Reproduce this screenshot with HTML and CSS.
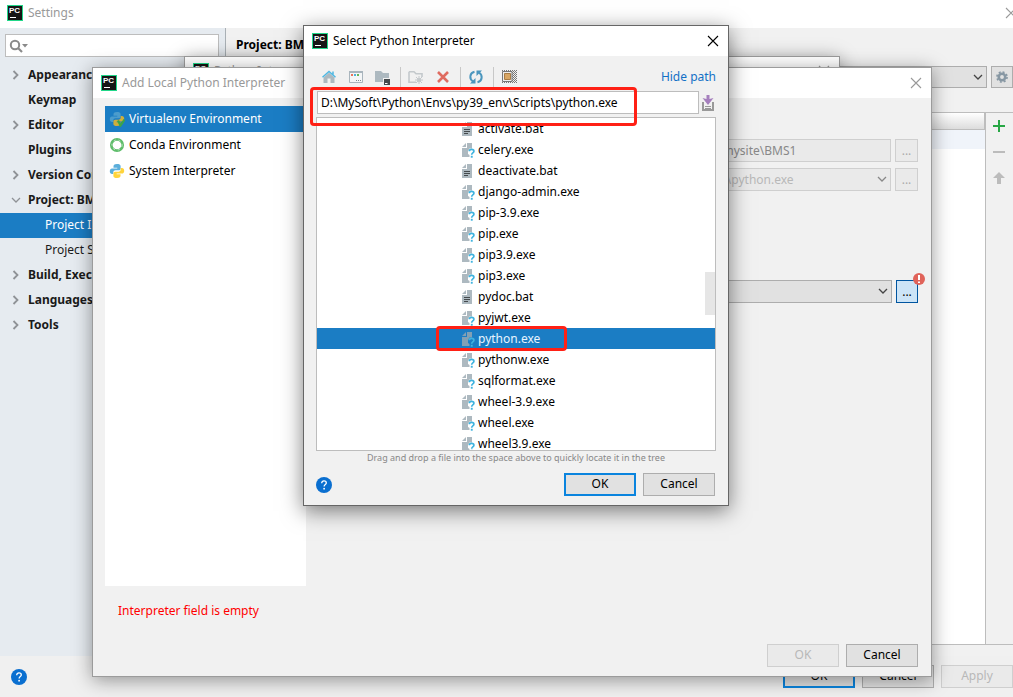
FILE: index.html
```html
<!DOCTYPE html>
<html lang="en">
<head>
<meta charset="utf-8">
<title>Settings</title>
<link rel="stylesheet" href="styles.css">
</head>
<body>
<svg class="defs" aria-hidden="true">
  <symbol id="chev-right" viewBox="0 0 10 10"><path d="M2.500 1 L6.500 5 L2.500 9" fill="none" stroke="#8f9296" stroke-width="1.800"/></symbol>
  <symbol id="chev-down" viewBox="0 0 10 10"><path d="M1 3 L5 7 L9 3" fill="none" stroke="currentColor" stroke-width="1.300"/></symbol>
  <symbol id="close" viewBox="0 0 12 12"><path d="M1 1 L11 11 M11 1 L1 11" fill="none" stroke="currentColor" stroke-width="1.100"/></symbol>
  <symbol id="help" viewBox="0 0 16 16"><circle cx="8" cy="8" r="8" fill="#0a6fd0"/><path d="M5.700 6.200 C5.700 4.700 6.700 3.900 8 3.900 C9.400 3.900 10.300 4.700 10.300 5.900 C10.300 7.600 8.100 7.500 8.100 9.500" fill="none" stroke="#fff" stroke-width="1.300"/><rect x="7.300" y="10.900" width="1.600" height="1.600" fill="#fff"/></symbol>
  <symbol id="py" viewBox="0 0 16 16"><path d="M8 1C5 1 4.500 2.100 4.500 3.200V4.800H8.300V5.400H3C1.600 5.400 .8 6.600 .8 8.300S1.800 11 3 11H4.300V9.400C4.300 8.100 5.300 7.300 6.500 7.300H9.800C10.900 7.300 11.600 6.500 11.600 5.500V3.100C11.600 1.600 10.200 1 8 1Z" fill="var(--a)"/><path d="M8 15c3 0 3.500-1.100 3.500-2.200v-1.600H7.700v-.6H13c1.400 0 2.200-1.200 2.200-2.900S14.200 5 13 5h-1.300v1.600c0 1.300-1 2.100-2.200 2.100H6.200c-1.100 0-1.800.8-1.800 1.800v2.400C4.400 14.400 5.800 15 8 15Z" fill="var(--b)"/></symbol>
  <symbol id="bat" viewBox="0 0 14 16"><path d="M6 1H11V15H1V6H6Z M1 5L5 1V5Z" fill="#adb9c0"/><path d="M3 8.500H9M3 10.500H9M3 12.500H7" stroke="#454a4d" stroke-width="1"/></symbol>
  <symbol id="exe" viewBox="0 0 14 16"><path d="M6 1H11V6.500H8.500L7 9V12L8.500 13V15H1V6H6Z M1 5L5 1V5Z" fill="var(--f,#adb9c0)"/><path d="M8.300 9.300C8.300 7.800 9.300 7.300 10.600 7.300C12 7.300 12.900 8 12.900 9.200C12.900 11 10.700 10.900 10.700 12.700" fill="none" stroke="#3fb3df" stroke-width="1.700"/><rect x="9.800" y="13.800" width="1.900" height="1.900" fill="#3fb3df"/></symbol>
</svg>

<main class="settings">
  <header class="titlebar settings-title">
    <span class="logo">PC</span><h1>Settings</h1>
    <button class="close" aria-label="Close settings"><svg><use href="#close"/></svg></button>
  </header>
  <div class="settings-body">
    <nav class="sidebar" aria-label="Settings sections">
      <label class="search">
        <svg viewBox="0 0 20 16"><circle cx="6" cy="7" r="4.200" fill="none" stroke="#8a8a8a" stroke-width="2"/><path d="M9 10L13 14" stroke="#8a8a8a" stroke-width="2.200"/><path d="M13 6H19L16 9.500Z" fill="#8a8a8a"/></svg>
        <input type="text" aria-label="Search settings">
      </label>
      <ul class="sections">
        <li><svg><use href="#chev-right"/></svg>Appearance &amp; Behavior</li>
        <li><svg></svg>Keymap</li>
        <li><svg><use href="#chev-right"/></svg>Editor</li>
        <li><svg></svg>Plugins</li>
        <li><svg><use href="#chev-right"/></svg>Version Control</li>
        <li><svg class="open"><use href="#chev-down"/></svg>Project: BMS1</li>
        <li class="child selected">Project Interpreter</li>
        <li class="child">Project Structure</li>
        <li><svg><use href="#chev-right"/></svg>Build, Execution, Deployment</li>
        <li><svg><use href="#chev-right"/></svg>Languages &amp; Frameworks</li>
        <li><svg><use href="#chev-right"/></svg>Tools</li>
      </ul>
    </nav>
    <section class="page">
      <h2>Project: BMS1</h2>
      <div class="interp-row">
        <div class="combo"><select aria-label="Project interpreter"><option></option></select><svg><use href="#chev-down"/></svg></div>
        <button class="gear" aria-label="Interpreter options"><svg viewBox="0 0 16 16"><circle cx="8" cy="8" r="3.700" fill="none" stroke="#8797a3" stroke-width="3"/><circle cx="8" cy="8" r="5.800" fill="none" stroke="#8797a3" stroke-width="1.800" stroke-dasharray="2.300 2.255"/></svg></button>
      </div>
      <div class="packages">
        <div class="package-list"><div class="package-head"></div><div class="package-row"></div></div>
        <div class="package-tools">
          <button aria-label="Install"><svg viewBox="0 0 12 12"><path d="M0 6H12M6 0V12" stroke="#27a745" stroke-width="2"/></svg></button>
          <button aria-label="Uninstall"><svg viewBox="0 0 12 12"><path d="M0 6H12" stroke="#bcbcbc" stroke-width="2"/></svg></button>
          <button aria-label="Upgrade"><svg viewBox="0 0 12 12"><path d="M6 0L12 6H8V12H4V6H0Z" fill="#bcbcbc"/></svg></button>
        </div>
      </div>
    </section>
  </div>
  <footer class="settings-footer">
    <button class="help" aria-label="Help"><svg><use href="#help"/></svg></button>
    <button class="btn primary">OK</button>
    <button class="btn">Cancel</button>
    <button class="btn" disabled>Apply</button>
  </footer>
</main>

<section class="window interpreters">
  <header class="titlebar"><span class="logo">PC</span><h2>Python Interpreters</h2>
    <button class="close" aria-label="Close interpreters"><svg><use href="#close"/></svg></button></header>
</section>

<section class="window add">
  <header class="titlebar"><span class="logo">PC</span><h2>Add Local Python Interpreter</h2>
    <button class="close" aria-label="Close add interpreter"><svg><use href="#close"/></svg></button></header>
  <div class="add-body">
    <ul class="kinds">
      <li class="selected"><svg class="py-dim" viewBox="0 0 16 16"><use href="#py"/><path d="M9 9.500L11.500 14.500L15.500 8.500" fill="none" stroke="#3da547" stroke-width="2.200"/></svg>Virtualenv Environment</li>
      <li><svg viewBox="0 0 16 16"><circle cx="8" cy="8" r="5.700" fill="none" stroke="#5fbd6b" stroke-width="2.700"/><circle cx="8" cy="8" r="5.100" fill="none" stroke="#c4e8c9" stroke-width="1" stroke-dasharray="2 3"/></svg>Conda Environment</li>
      <li><svg class="py" viewBox="0 0 16 16"><use href="#py"/></svg>System Interpreter</li>
    </ul>
    <div class="form">
      <div class="field"><input type="text" value="Code\mysite\BMS1" aria-label="Location" disabled><button class="browse" aria-label="Browse location" disabled>...</button></div>
      <div class="field"><div class="combo muted"><select aria-label="Base interpreter" disabled><option>Scripts\python.exe</option></select><svg><use href="#chev-down"/></svg></div><button class="browse" aria-label="Browse base interpreter" disabled>...</button></div>
      <div class="field existing"><div class="combo"><select aria-label="Interpreter"><option></option></select><svg><use href="#chev-down"/></svg></div><button class="browse active" aria-label="Browse interpreter">...<svg class="error" viewBox="0 0 12 12"><circle cx="6" cy="6" r="6" fill="#e0635a"/><path d="M6 2V7M6 8.500V10" stroke="#fff" stroke-width="2"/></svg></button></div>
    </div>
  </div>
  <p class="problem">Interpreter field is empty</p>
  <footer class="actions"><button class="btn" disabled>OK</button><button class="btn">Cancel</button></footer>
</section>

<section class="window select" role="dialog" aria-label="Select Python Interpreter">
  <header class="titlebar"><span class="logo">PC</span><h2>Select Python Interpreter</h2>
    <button class="close" aria-label="Close"><svg><use href="#close"/></svg></button></header>
  <div class="toolbar">
    <button aria-label="Home"><svg viewBox="0 0 16 16"><path d="M2.500 8.500L8 3.800L13.500 8.500V14H9.500V9.500H6.500V14H2.500Z" fill="#adb9c0"/><path d="M1.500 8.300L8 2.500L14.500 8.300M12 2.500V6" fill="none" stroke="#50b8e2" stroke-width="1.500"/></svg></button>
    <button aria-label="Desktop"><svg viewBox="0 0 16 16"><path d="M1.500 2.500H14.500V13.500H1.500Z" fill="#f4f6f7" stroke="#a9b5bd"/><path d="M1 3H15" stroke="#a9b5bd" stroke-width="2"/><path d="M3 5H5V7H3Z" fill="#e8745e"/><path d="M6 5H8V7H6Z" fill="#4eb2da"/><path d="M9 5H11V7H9Z" fill="#67b65a"/><path d="M8 11.500H9M10 11.500H11M12 11.500H13" stroke="#808b92"/></svg></button>
    <button aria-label="Project directory"><svg viewBox="0 0 16 16"><path d="M0 2H6L8 4H14V9H8V13H0Z" fill="#adb9c0"/><path d="M9 10H15V16H9Z" fill="#454a4d"/><path d="M10 14.500H12.500" stroke="#fff"/></svg></button>
    <span class="sep"></span>
    <button aria-label="New folder"><svg viewBox="0 0 16 16"><path d="M1 2.800H6L8 4.800H14V8M8 13.200H1V2.800" fill="none" stroke="#c4c9cc" stroke-width="1.600"/><circle cx="11" cy="11" r="2" fill="#c4c9cc"/><path d="M11 7V15M7 11H15M8 8L14 14M14 8L8 14" stroke="#c4c9cc"/></svg></button>
    <button aria-label="Delete"><svg viewBox="0 0 16 16"><path d="M3 3L13 13M13 3L3 13" stroke="#df6b60" stroke-width="2.600"/></svg></button>
    <span class="sep"></span>
    <button aria-label="Refresh"><svg viewBox="0 0 16 16"><path d="M6.500 2.800C1.500 4 1 10 5 12.500M9.500 13.200C14.500 12 15 6 11 3.500" fill="none" stroke="#4b96be" stroke-width="2"/><path d="M2 14.500H7.500V9Z M14 1.500H8.500V7Z" fill="#4b96be"/></svg></button>
    <span class="sep"></span>
    <button aria-label="Show hidden files"><svg viewBox="0 0 16 16"><path d="M1 1.500H16M1 3.500H16M1 5.500H16M1 7.500H16M1 9.500H16M1 11.500H16M1 13.500H16" stroke="#777" stroke-dasharray="1 1"/><path d="M1 2.500H16M1 4.500H16M1 6.500H16M1 8.500H16M1 10.500H16M1 12.500H16" stroke="#777" stroke-dasharray="1 1" stroke-dashoffset="1"/><path d="M1.500 2.500H11V12.500H1.500Z" fill="#eee" stroke="#777"/><path d="M3.500 4.500H9.500V10.500H3.500Z" fill="#d8a664" stroke="#a97c45"/></svg></button>
    <a class="hide-path" href="#path">Hide path</a>
  </div>
  <div class="path-row">
    <input id="path" type="text" aria-label="Path" value="D:\MySoft\Python\Envs\py39_env\Scripts\python.exe">
    <button class="history" aria-label="Recent paths"><svg viewBox="0 0 12 16"><path d="M1 7V15H11V7" fill="none" stroke="#999" stroke-width="2"/><path d="M3 11.500H9M3 13.500H9" stroke="#999"/><path d="M4.500 0H7.500V4L11.500 3L6 10L.500 3L4.500 4Z" fill="#a57fbd"/></svg></button>
    <span class="mark path-mark"></span>
  </div>
  <div class="tree">
    <ul>
      <li><svg><use href="#bat"/></svg>activate.bat</li>
      <li><svg><use href="#exe"/></svg>celery.exe</li>
      <li><svg><use href="#bat"/></svg>deactivate.bat</li>
      <li><svg><use href="#exe"/></svg>django-admin.exe</li>
      <li><svg><use href="#exe"/></svg>pip-3.9.exe</li>
      <li><svg><use href="#exe"/></svg>pip.exe</li>
      <li><svg><use href="#exe"/></svg>pip3.9.exe</li>
      <li><svg><use href="#exe"/></svg>pip3.exe</li>
      <li><svg><use href="#bat"/></svg>pydoc.bat</li>
      <li><svg><use href="#exe"/></svg>pyjwt.exe</li>
      <li class="selected"><svg><use href="#exe"/></svg>python.exe<span class="mark file-mark"></span></li>
      <li><svg><use href="#exe"/></svg>pythonw.exe</li>
      <li><svg><use href="#exe"/></svg>sqlformat.exe</li>
      <li><svg><use href="#exe"/></svg>wheel-3.9.exe</li>
      <li><svg><use href="#exe"/></svg>wheel.exe</li>
      <li><svg><use href="#exe"/></svg>wheel3.9.exe</li>
    </ul>
    <span class="thumb"></span>
  </div>
  <p class="hint">Drag and drop a file into the space above to quickly locate it in the tree</p>
  <footer class="actions"><button class="help" aria-label="Help"><svg><use href="#help"/></svg></button><button class="btn primary">OK</button><button class="btn">Cancel</button></footer>
</section>
</body>
</html>
```

FILE: styles.css
```css
* { box-sizing: border-box; }
body {
  margin: 0;
  overflow: hidden;
  font: 12px/16px "Noto Sans", "Open Sans", sans-serif;
  color: #000;
  background: #f1f1f1;
}
h1, h2, p, ul { margin: 0; padding: 0; font-size: 12px; font-weight: 400; }
ul { list-style: none; }
button, input, select { font: inherit; color: inherit; margin: 0; border-radius: 0; }
button { padding: 0; border: 0; background: none; }
svg { display: block; flex: none; }
.defs { position: absolute; width: 0; height: 0; }

.titlebar { display: flex; align-items: center; height: 30px; padding: 0 9px 0 8px; background: #fff; color: #999; }
.titlebar .close { margin-left: auto; }
.close svg { width: 12px; height: 12px; }
.logo {
  width: 16px; height: 16px; margin-right: 5px; padding: 1px 0 0 1px;
  border: 1px solid #21d789; background: #151515; color: #fff;
  font: bold 8px/8px "Liberation Sans", sans-serif;
  background-image: linear-gradient(#fff, #fff);
  background-size: 6px 1px; background-position: 2px 11px; background-repeat: no-repeat;
}
.help svg { width: 16px; height: 16px; }
.btn { width: 72px; height: 23px; padding-bottom: 2px; border: 1px solid #adadad; background: #e1e1e1; }
.btn.primary { border: 2px solid #0a84de; }
.btn:disabled { border-color: #cfcfcf; background: #eaeaea; color: #b8b8b8; }
.combo { position: relative; flex: 1; height: 23px; color: #444; }
.combo.muted { color: #888; }
.combo select { appearance: none; width: 100%; height: 100%; padding: 0 6px; border: 1px solid #adadad; background: #e1e1e1; }
.combo svg { position: absolute; right: 4px; top: 6px; width: 10px; height: 10px; }
.selected { background: #1b7dc4; color: #fff; }

.settings { display: flex; flex-direction: column; height: 100vh; }
.settings-title { height: 28px; padding: 0 0 3px 7px; }
.settings-title .close { margin-right: -4px; }
.settings-body { display: flex; flex: 1; min-height: 0; }
.sidebar { width: 226px; padding-top: 6px; border-right: 1px solid #a9b0b5; background: #e6ebf0; }
.search { display: flex; align-items: center; height: 23px; margin: 0 6px 6px 5px; padding-left: 3px; border: 1px solid #bdbdbd; background: #fff; }
.search svg { width: 20px; height: 16px; }
.search input { flex: 1; min-width: 0; border: 0; outline: 0; background: none; }
.sections li { display: flex; align-items: center; gap: 7px; height: 25px; padding: 0 0 2px 11px; font-weight: 700; white-space: nowrap; color: #1a1a1a; }
.sections svg { width: 10px; height: 10px; color: #8f9296; }
.sections .child { padding-left: 45px; font-weight: 400; }
.sections .selected { color: #fff; }

.page { display: flex; flex: 1; flex-direction: column; min-width: 0; padding-bottom: 11px; }
.page h2 { padding: 9px 10px 13px; font-weight: 700; }
.interp-row { display: flex; gap: 4px; margin-left: 120px; }
.interp-row .combo { height: 22px; }
.gear { display: flex; align-items: center; justify-content: center; width: 22px; height: 22px; border: 1px solid #adadad; background: #e1e1e1; }
.gear svg { width: 14px; height: 14px; }
.packages { display: flex; flex: 1; margin: 24px 0 0 10px; border-top: 1px solid #bdbdbd; border-bottom: 1px solid #bdbdbd; }
.package-list { flex: 1; border-right: 1px solid #bdbdbd; background: #fff; }
.package-head { height: 17px; border-right: 1px solid #bdbdbd; border-bottom: 1px solid #bdbdbd; background: linear-gradient(#fff, #dcdcdc); }
.package-row { height: 19px; background: #f0f4fa; }
.package-tools { width: 27px; padding: 7px 0 0 7px; }
.package-tools button { display: block; margin-bottom: 14px; }
.package-tools svg { width: 12px; height: 12px; }
.settings-footer { display: flex; align-items: center; gap: 7px; height: 41px; padding-left: 11px; background: #f0f0f0; }
.settings-footer .help, .select .help { margin-right: auto; }

.window { position: absolute; border: 1px solid #9b9b9b; background: #f1f1f1; box-shadow: 0 3px 18px rgba(0, 0, 0, .4); }
.interpreters { inset: 56px 173px 60px 184px; }
.interpreters .titlebar { height: 28px; }

.add { display: flex; flex-direction: column; inset: 67px 81px 20px 92px; }
.add-body { display: flex; flex: 1; min-height: 0; padding: 8px 13px 0 12px; }
.kinds { width: 201px; background: #fff; }
.kinds li { display: flex; align-items: center; gap: 4px; height: 26px; padding-left: 4px; }
.kinds svg { width: 16px; height: 16px; }
.py { --a: #5baedb; --b: #ffd43b; }
.py-dim { --a: #4b9ccc; --b: #cfae3c; }
.form { display: flex; flex: 1; flex-direction: column; gap: 6px; padding: 33px 0 0 378px; }
.field { display: flex; gap: 4px; }
.field > input { flex: 1; min-width: 0; height: 23px; padding: 0 4px; border: 1px solid #cfcfcf; background: #eaeaea; color: #888; }
.field select:disabled { padding: 0 4px; border-color: #cfcfcf; background: #eaeaea; color: #b8b8b8; opacity: 1; }
.browse { width: 23px; height: 23px; padding-top: 1px; border: 1px solid #cfcfcf; background: #eaeaea; color: #aaa; }
.browse.active { position: relative; width: 22px; border-color: #0055a0; background: #cce4f7; color: #000; }
.error { position: absolute; right: -8px; top: -8px; width: 12px; height: 12px; }
.existing { margin-top: 83px; }
.problem { padding: 17px 25px 25px; color: #f00; }
.actions { display: flex; align-items: center; justify-content: flex-end; gap: 7px; padding: 0 13px 9px; }

.select { left: 303px; top: 25px; width: 426px; border-color: #666; box-shadow: 0 5px 20px rgba(0, 0, 0, .5); }
.select .titlebar { color: #000; }
.toolbar { display: flex; align-items: center; height: 35px; padding: 6px 12px 0 17px; }
.toolbar button { margin-right: 11px; }
.toolbar svg { width: 16px; height: 16px; }
.sep { width: 1px; height: 20px; margin-right: 7px; margin-left: -2px; background: #c8c8c8; }
.hide-path { margin-left: auto; color: #1370c6; text-decoration: none; }
.path-row { position: relative; display: flex; align-items: center; gap: 3px; padding: 0 14px 3px 13px; }
.path-row input { flex: 1; height: 23px; padding: 0 3px; border: 1px solid #bdbdbd; background: #fff; outline: 0; }
.history svg { width: 12px; height: 16px; }
.mark { position: absolute; border: 3px solid #ff2015; border-radius: 4px; }
.path-mark { left: 6px; top: -4px; width: 327px; height: 39px; z-index: 1; }
.tree { position: relative; height: 334px; margin: 0 12px; overflow: hidden; border: 1px solid #bdbdbd; background: #fff; }
.tree li { position: relative; display: flex; align-items: center; gap: 3px; height: 21px; padding-left: 144px; }
.tree svg { width: 14px; height: 16px; }
.tree .selected { --f: #82a0b4; color: #e8f4ff; }
.file-mark { left: 119px; top: -2px; width: 131px; height: 25px; z-index: 1; }
.thumb { position: absolute; right: 0; top: 154px; width: 10px; height: 43px; background: #e6e6e6; }
.hint { height: 22px; color: #888; font-size: 9px; line-height: 14px; text-align: center; }
.select .actions { padding-left: 12px; }
```
